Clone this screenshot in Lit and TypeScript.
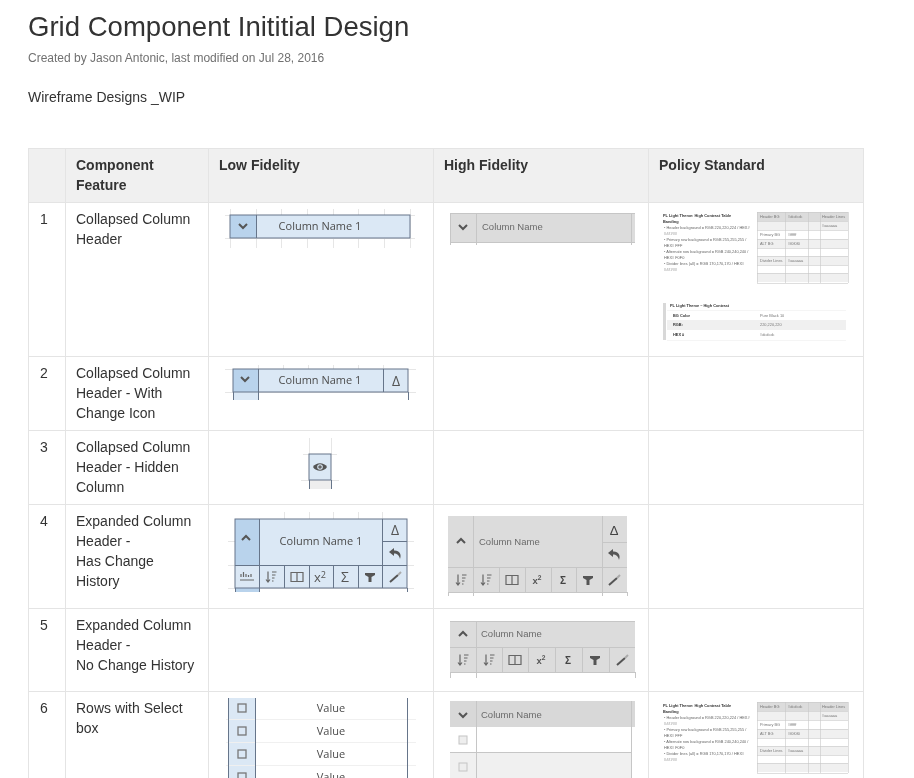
import { LitElement, html, css, svg } from "lit";
import { customElement } from "lit/decorators.js";

const BLUE = "#b9d3ec", LIGHT = "#dbe8f5";

const line = (x1: number, y1: number, x2: number, y2: number, c = "ln") =>
  svg`<line class=${c} x1=${x1} y1=${y1} x2=${x2} y2=${y2}></line>`;
const rect = (x: number, y: number, w: number, h: number, fill: string) =>
  svg`<rect x=${x} y=${y} width=${w} height=${h} fill=${fill}></rect>`;
const label = (x: number, y: number, t: string, c: string) =>
  svg`<text class=${c} x=${x} y=${y}>${t}</text>`;
const at = (x: number, y: number, inner: unknown, c = "ic") =>
  svg`<g class=${c} transform="translate(${x} ${y})">${inner}</g>`;

const chevDown = (x: number, y: number) => at(x, y, svg`<path class="chev" d="M-4 -2L0 2L4 -2"></path>`);
const chevUp = (x: number, y: number) => at(x, y, svg`<path class="chev" d="M-4 2L0 -2L4 2"></path>`);
const sort = (x: number, y: number) => at(x, y, svg`<path class="thin" d="M-3 -5.5V5M-5 2.5L-3 5L-1 2.5M1 -5H5.5M1 -2H4.5M1 1H3.5M1 4H2.5"></path>`);
const cols = (x: number, y: number) => at(x, y, svg`<path class="thin" d="M-6 -4.5H6V4.5H-6ZM0 -4.5V4.5"></path>`);
const filt = (x: number, y: number) => at(x, y, svg`<path class="solid" d="M-5 -4H5V-2L1.5 0V5H-1.5V0L-5 -2Z"></path>`);
const wand = (x: number, y: number) => at(x, y, svg`<path class="wand" d="M-5 5L3 -2"></path><path class="wandl" d="M3 -2L6 -5"></path>`);
const undo = (x: number, y: number) => at(x, y, svg`<path class="solid" d="M-1 -5L-6 -1L-1 3V.5C2 .5 4 2 5 6C7 1 4 -3 -1 -2.5Z"></path>`);
const eye = (x: number, y: number) => at(x, y, svg`<path class="solid" d="M-7 0C-4 -5 4 -5 7 0C4 5 -4 5 -7 0Z"></path><circle cx="0" cy="0" r="2.8" fill="#dbe8f5"></circle><circle cx="0" cy="0" r="1.8" fill="#666"></circle>`);
const hist = (x: number, y: number) => at(x, y, svg`<path class="thin" d="M-6 -3V0M-3.5 -5V0M-1 -3V0M1.5 -2V0M4 -3V0M-7 3H7"></path>`);
const sq = (x: number, y: number, c = "box") => svg`<rect class=${c} x=${x - 4} y=${y - 4} width="8" height="8"></rect>`;
const delta = (x: number, y: number, c: string) => label(x, y, "Δ", c);
const sup = (x: number, y: number, c: string) =>
  svg`<text class=${c} x=${x} y=${y}>x<tspan class="sup" dy="-4">2</tspan></text>`;
const sigma = (x: number, y: number, c: string) => label(x, y, "Σ", c);

function ticks(xs: number[], y1: number, y2: number) {
  return xs.map((x) => line(x, y1, x, y2, "tick"));
}

const low1 = () => svg`
  ${ticks([230, 256, 281, 307, 333, 358, 384, 410], 209, 248)}
  ${line(225, 215, 415, 215, "tick")}${line(225, 238, 415, 238, "tick")}
  ${rect(230, 215, 26, 23, BLUE)}${rect(256, 215, 154, 23, LIGHT)}
  <rect class="frame" x="230" y="215" width="180" height="23" fill="none"></rect>
  ${line(256, 215, 256, 238, "frameln")}
  ${chevDown(243, 226)}
  ${label(320, 230, "Column Name 1", "lowt mid")}`;

const low2 = () => svg`
  ${ticks([258, 283, 308, 333, 358, 383], 365, 369)}
  ${line(225, 369, 416, 369, "tick")}${line(225, 392, 416, 392, "tick")}
  ${rect(233, 369, 25, 31, BLUE)}${rect(233, 392, 25, 8, LIGHT)}${rect(258, 369, 150, 23, LIGHT)}
  <rect class="frame" x="233" y="369" width="175" height="23" fill="none"></rect>
  ${line(258, 369, 258, 400, "frameln")}${line(383, 369, 383, 392, "frameln")}
  ${line(233, 392, 233, 400, "frameln")}${line(408, 392, 408, 400, "frameln")}
  ${chevDown(245, 379)}
  ${label(320, 384, "Column Name 1", "lowt mid")}
  ${delta(396, 386, "lowi mid")}`;

const low3 = () => svg`
  ${ticks([309, 331], 438, 454)}
  ${line(303, 454, 337, 454, "tick")}${line(301, 480, 339, 480, "tick")}
  ${rect(309, 454, 22, 26, LIGHT)}${rect(309, 480, 22, 9, "#eeeeee")}
  <rect class="frame" x="309" y="454" width="22" height="26" fill="none"></rect>
  ${line(309, 480, 309, 489, "frameln")}${line(331, 480, 331, 489, "frameln")}
  ${eye(320, 467)}`;

const low4 = () => svg`
  ${ticks([284, 309, 333, 358, 382], 512, 519)}
  ${line(228, 565, 414, 565, "tick")}${line(228, 588, 414, 588, "tick")}${line(228, 541, 414, 541, "tick")}
  ${rect(235, 519, 172, 69, LIGHT)}${rect(235, 519, 24, 46, BLUE)}${rect(235, 588, 24, 4, BLUE)}
  <rect class="frame" x="235" y="519" width="172" height="69" fill="none"></rect>
  ${line(259, 519, 259, 592, "frameln")}${line(382, 519, 382, 588, "frameln")}
  ${line(235, 565, 407, 565, "frameln")}${line(382, 541, 407, 541, "frameln")}
  ${[284, 309, 333, 358].map((x) => line(x, 565, x, 588, "frameln"))}
  ${line(235, 588, 235, 592, "frameln")}${line(407, 588, 407, 592, "frameln")}
  ${chevUp(246, 538)}
  ${label(321, 545, "Column Name 1", "lowt mid")}
  ${delta(395, 535, "lowi mid")}${undo(395, 553)}
  ${hist(247, 577)}${sort(271, 577)}${cols(297, 577)}
  ${sup(320, 582, "lowx mid")}${sigma(345, 582, "lowi mid")}${filt(370, 577)}${wand(395, 577)}`;

const high1 = () => svg`
  ${rect(450, 213, 185, 29, "#dcdcdc")}
  ${line(450, 213, 635, 213, "hln")}${line(450, 242, 635, 242, "hln")}
  ${line(476, 213, 476, 245, "hln")}${line(631, 213, 631, 245, "hln")}${line(450, 213, 450, 245, "hln")}
  ${chevDown(463, 227)}
  ${label(482, 230, "Column Name", "hight")}`;

const high4 = () => svg`
  ${rect(448, 516, 179, 76, "#dcdcdc")}
  ${[473, 602].map((x) => line(x, 516, x, 596, "hln"))}
  ${[448, 627].map((x) => line(x, 592, x, 596, "hln"))}
  ${line(448, 567, 627, 567, "hln")}${line(602, 542, 627, 542, "hln")}${line(448, 592, 627, 592, "hln")}
  ${[499, 525, 551, 576].map((x) => line(x, 567, x, 592, "hln"))}
  ${chevUp(461, 541)}
  ${label(479, 545, "Column Name", "hight")}
  ${delta(614, 535, "highi mid")}${undo(614, 554)}
  ${sort(461, 580)}${sort(486, 580)}${cols(512, 580)}
  ${sup(537, 584, "highx mid")}${sigma(563, 584, "highb mid")}${filt(588, 580)}${wand(614, 580)}`;

const high5 = () => svg`
  ${rect(450, 621, 185, 51, "#dcdcdc")}
  ${line(450, 621, 635, 621, "hln")}${line(450, 647, 635, 647, "hln")}${line(450, 672, 635, 672, "hln")}
  ${line(476, 621, 476, 678, "hln")}${line(450, 672, 450, 678, "hln")}${line(635, 672, 635, 678, "hln")}
  ${[502, 528, 555, 582, 609].map((x) => line(x, 647, x, 672, "hln"))}
  ${chevUp(463, 634)}
  ${label(481, 637, "Column Name", "hight")}
  ${sort(463, 660)}${sort(489, 660)}${cols(515, 660)}
  ${sup(541, 664, "highx mid")}${sigma(568, 664, "highb mid")}${filt(595, 660)}${wand(622, 660)}`;

const low6 = () => svg`
  ${rect(229, 698, 26, 90, LIGHT)}
  ${[719, 742, 765].map((y) => line(226, y, 416, y, "tickf"))}
  ${line(228, 698, 228, 790, "frameln")}${line(255, 698, 255, 790, "frameln")}${line(407, 698, 407, 790, "frameln")}
  ${[708, 731, 754, 777].map((y) => svg`${sq(242, y, "boxd")}${label(331, y + 4, "Value", "lowt mid")}`)}`;

const high6 = () => svg`
  ${rect(450, 701, 185, 26, "#d8d8d8")}${rect(450, 753, 181, 40, "#f0f0f0")}
  ${line(450, 752, 631, 752, "hln")}
  ${line(476, 701, 476, 790, "hln")}${line(631, 701, 631, 790, "hln")}
  ${chevDown(463, 715)}
  ${label(481, 718, "Column Name", "hight")}
  ${sq(463, 740)}${sq(463, 767)}`;

const thumbTop = (dy: number) => svg`
  ${label(663, 217 + dy, "PL Light Theme: High Contrast Table", "th b")}
  ${label(663, 223 + dy, "Banding", "th b")}
  ${[
    [229, "•  Header background = RGB 220,220,224  /  HEX#"], [235, "    ######"],
    [241, "•  Primary row background = RGB 255,255,255  /"], [247, "    HEX# FFF"],
    [253, "•  Alternate row background = RGB 240,240,240  /"], [259, "    HEX# F0F0"],
    [265, "•  Divider lines (all) = RGB 170,170,170  /  HEX#"], [271, "    ######"],
  ].map(([y, t]) => label(664, (y as number) + dy, t as string, "th"))}
  ${rect(757, 212 + dy, 91, 9, "#dcdcdc")}
  ${[221, 239, 256, 273].map((y) => rect(757, y + dy, 91, 9, "#f0f0f0"))}
  ${[212, 221, 230, 239, 248, 256, 265, 273, 283].map((y) => line(757, y + dy, 848, y + dy, "tln"))}
  ${[757, 785, 808, 820, 848].map((x) => line(x, 212 + dy, x, 283 + dy, "tln"))}
  ${label(760, 218 + dy, "Header BG", "th g")}${label(788, 218 + dy, "#dcdcdc", "th g")}${label(822, 218 + dy, "Header Lines", "th g")}
  ${label(822, 227 + dy, "#aaaaaa", "th g")}
  ${label(760, 236 + dy, "Primary BG", "th g")}${label(788, 236 + dy, "#ffffff", "th g")}
  ${label(760, 245 + dy, "ALT BG", "th g")}${label(788, 245 + dy, "#f0f0f0", "th g")}
  ${label(760, 262 + dy, "Divider Lines", "th g")}${label(788, 262 + dy, "#aaaaaa", "th g")}`;

const policy1 = () => svg`
  ${thumbTop(0)}
  ${rect(663, 303, 3, 37, "#d8d8d8")}
  ${label(670, 307, "PL Light Theme – High Contrast", "th b")}
  ${rect(667, 320, 179, 10, "#f0f0f0")}
  ${line(667, 310, 846, 310, "tl2")}${line(667, 340, 846, 340, "tl2")}
  ${label(673, 317, "BG Color", "th b")}${label(760, 317, "Pure Black 10", "th g")}
  ${label(673, 326, "RGB:", "th b")}${label(760, 326, "220,220,220", "th g")}
  ${label(673, 336, "HEX #", "th b")}${label(760, 336, "#dcdcdc", "th g")}`;

const policy6 = () => thumbTop(490);

const COL_X = [28, 65, 208, 433, 648, 863];

const ROWS = [
  { n: "1", top: 202, h: 154, feat: ["Collapsed Column", "Header"], low: low1, high: high1, policy: policy1 },
  { n: "2", top: 356, h: 74, feat: ["Collapsed Column", "Header - With", "Change Icon"], low: low2 },
  { n: "3", top: 430, h: 74, feat: ["Collapsed Column", "Header - Hidden", "Column"], low: low3 },
  { n: "4", top: 504, h: 104, feat: ["Expanded Column", "Header -", "Has Change", "History"], low: low4, high: high4 },
  { n: "5", top: 608, h: 83, feat: ["Expanded Column", "Header -", "No Change History"], high: high5 },
  { n: "6", top: 691, h: 100, feat: ["Rows with Select", "box"], low: low6, high: high6, policy: policy6 },
];

@customElement("app-root")
export class AppRoot extends LitElement {
  static styles = css`
    :host {
      display: block;
      width: 914px;
      height: 778px;
      overflow: hidden;
      background: #fff;
      font-family: "Liberation Sans", Arial, sans-serif;
      color: #333;
    }
    .page { padding: 9px 0 0 28px; filter: blur(0.35px); }
    h1 { margin: 0; font-size: 27.55px; line-height: 36px; font-weight: 400; color: #333; }
    .meta { margin: 4px 0 0; font-size: 12px; line-height: 18px; color: #707070; }
    .lead { margin: 20px 0 0; font-size: 14px; line-height: 20px; color: #333; }
    table { margin-top: 41px; border-collapse: collapse; table-layout: fixed; width: 835px; font-size: 14px; line-height: 20px; }
    th, td { border: 1px solid #e4e4e4; padding: 6px 10px 7px; text-align: left; vertical-align: top; }
    th { background: #f0f0f0; font-weight: 700; }
    td.num { padding-left: 11px; }
    td.art { padding: 0; }
    .feat div { white-space: nowrap; }
    svg { display: block; }
    .ln, .tick, .tickf, .frameln, .hln, .tln, .tl2 { fill: none; shape-rendering: crispEdges; }
    .tick { stroke: #e6e6e6; stroke-width: 1; }
    .tickf { stroke: #f0f0f0; stroke-width: 1; }
    .frame, .frameln { stroke: #66758a; stroke-width: 1; }
    .frame { fill: none; }
    .hln { stroke: #c6c6c6; stroke-width: 1; }
    .tln { stroke: #c8c8c8; stroke-width: 0.6; }
    .tl2 { stroke: #eeeeee; stroke-width: 0.6; }
    .chev { fill: none; stroke: #555; stroke-width: 2; }
    .thin { fill: none; stroke: #666; stroke-width: 1.2; }
    .solid { fill: #555; }
    .wand { fill: none; stroke: #555; stroke-width: 2; }
    .wandl { fill: none; stroke: #aaa; stroke-width: 2; }
    .box { fill: #eee; stroke: #c4c4c4; stroke-width: 1; }
    .boxd { fill: #dbe8f5; stroke: #777; stroke-width: 1.3; }
    .mid { text-anchor: middle; }
    .lowt { font: 11px "Open Sans", sans-serif; fill: #4c4c4c; }
    .lowi { font: 14px "Open Sans", sans-serif; fill: #555; }
    .lowx { font: 13px "Open Sans", sans-serif; fill: #555; }
    .hight { font: 9.5px "Liberation Sans", sans-serif; fill: #6a6a6a; }
    .highi { font: 13px "Liberation Sans", sans-serif; fill: #444; }
    .highx { font: 700 9.5px "Liberation Sans", sans-serif; fill: #555; }
    .highb { font: 700 10px "Liberation Sans", sans-serif; fill: #444; }
    .sup { font-size: 0.7em; }
    .th { font: 3.9px "Liberation Sans", sans-serif; fill: #666; }
    .th.b { font-weight: 700; fill: #333; }
    .th.g { fill: #777; }
    .thumb { filter: blur(0.7px); }
  `;

  private art(i: number, top: number, h: number, draw?: () => unknown, cls = "") {
    const x = COL_X[i] + 1, y = top + 1, w = COL_X[i + 1] - COL_X[i] - 1, ih = h - 1;
    return html`<td class="art" style="height:${ih}px">
      ${draw
        ? html`<svg class=${cls} width=${w} height=${ih} viewBox="${x} ${y} ${w} ${ih}">${draw()}</svg>`
        : ""}
    </td>`;
  }

  render() {
    return html`<div class="page">
      <h1>Grid Component Inititial Design</h1>
      <p class="meta">Created by Jason Antonic, last modified on Jul 28, 2016</p>
      <p class="lead">Wireframe Designs _WIP</p>
      <table>
        <colgroup>
          ${COL_X.slice(0, -1).map((x, i) => html`<col style="width:${COL_X[i + 1] - x}px" />`)}
        </colgroup>
        <thead>
          <tr>
            <th></th>
            <th>Component Feature</th>
            <th>Low Fidelity</th>
            <th>High Fidelity</th>
            <th>Policy Standard</th>
          </tr>
        </thead>
        <tbody>
          ${ROWS.map(
            (r) => html`<tr>
              <td class="num">${r.n}</td>
              <td class="feat">${r.feat.map((l) => html`<div>${l}</div>`)}</td>
              ${this.art(2, r.top, r.h, r.low)}
              ${this.art(3, r.top, r.h, r.high)}
              ${this.art(4, r.top, r.h, r.policy, "thumb")}
            </tr>`
          )}
        </tbody>
      </table>
    </div>`;
  }
}
